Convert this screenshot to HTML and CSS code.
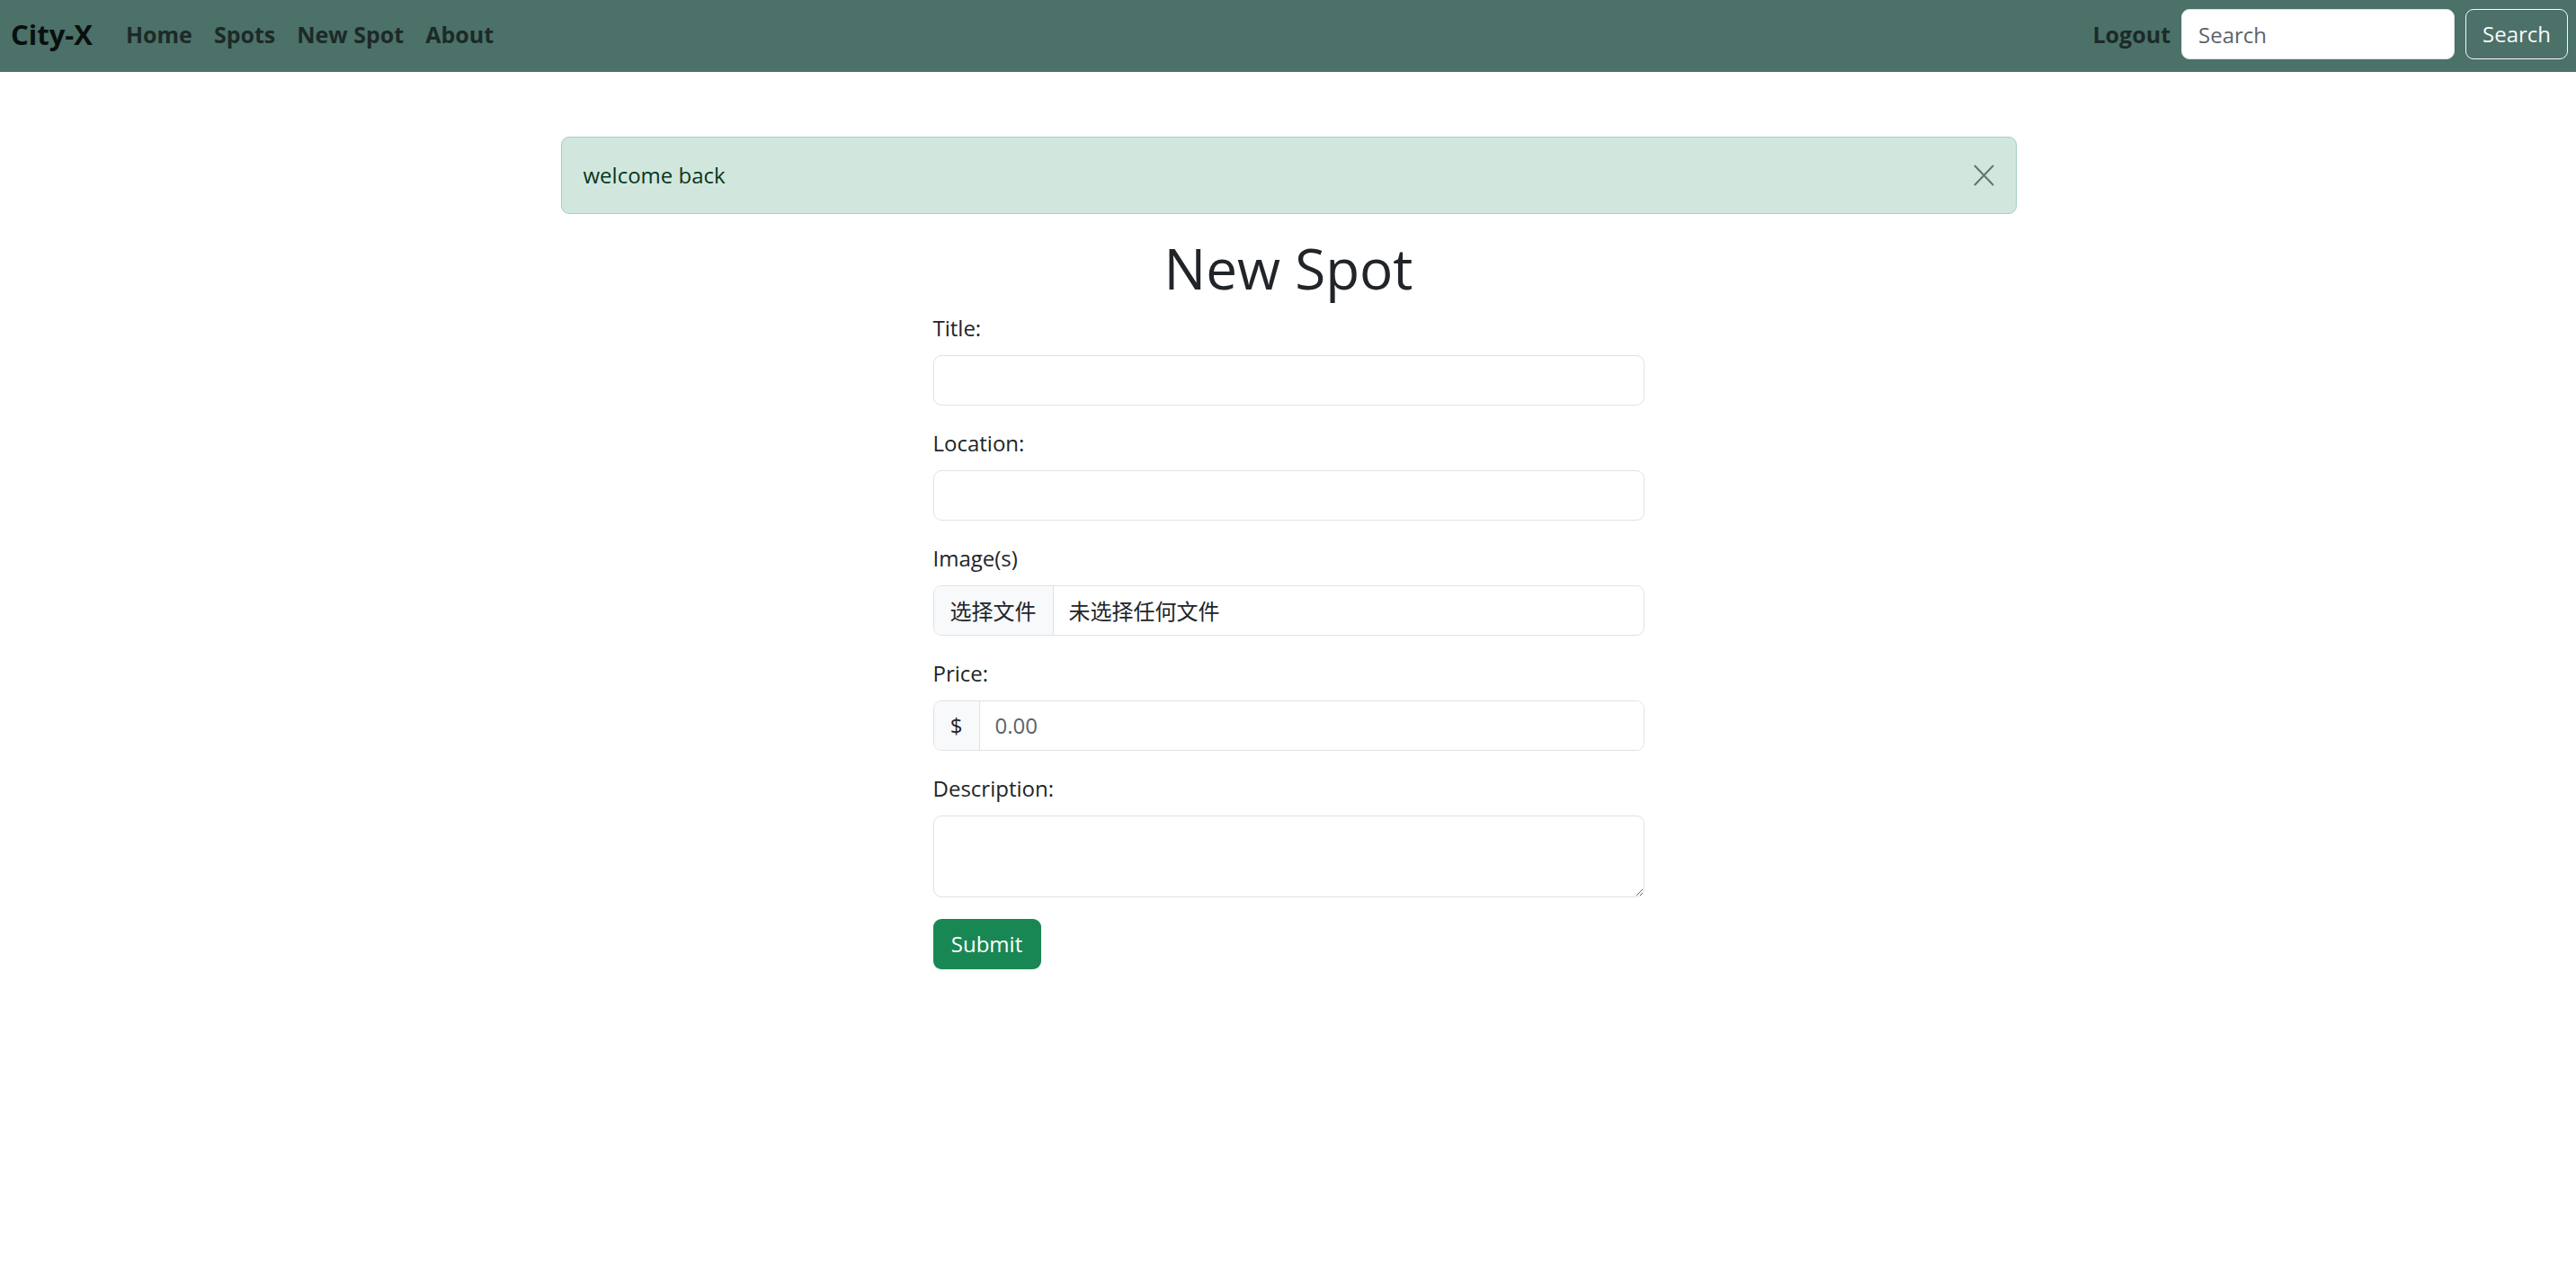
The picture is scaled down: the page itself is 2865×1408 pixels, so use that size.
FILE: index.html
```html
<!DOCTYPE html>
<html lang="en">
<head>
<meta charset="utf-8">
<title>New Spot</title>
<link rel="stylesheet" href="styles.css">
</head>
<body>
<nav class="navbar">
  <div class="nav-left">
    <a class="brand" href="#">City-X</a>
    <a class="nav-link" href="#">Home</a>
    <a class="nav-link" href="#">Spots</a>
    <a class="nav-link" href="#">New Spot</a>
    <a class="nav-link" href="#">About</a>
  </div>
  <div class="nav-right">
    <a class="nav-link" href="#">Logout</a>
    <form class="search-form">
      <input class="search-input" type="search" placeholder="Search">
      <button class="search-btn" type="button">Search</button>
    </form>
  </div>
</nav>

<main class="main">
  <div class="alert">
    <span>welcome back</span>
    <svg class="close-icon" width="23" height="24" viewBox="0 0 23 24" aria-label="Close">
      <line x1="1" y1="1" x2="22" y2="23" />
      <line x1="22" y1="1" x2="1" y2="23" />
    </svg>
  </div>

  <h1 class="page-title">New Spot</h1>

  <form class="spot-form">
    <div class="field">
      <label class="field-label">Title:</label>
      <input class="control" type="text">
    </div>
    <div class="field">
      <label class="field-label">Location:</label>
      <input class="control" type="text">
    </div>
    <div class="field">
      <label class="field-label">Image(s)</label>
      <div class="file-control">
        <span class="file-btn">选择文件</span>
        <span class="file-name">未选择任何文件</span>
      </div>
    </div>
    <div class="field">
      <label class="field-label">Price:</label>
      <div class="input-group">
        <span class="addon">$</span>
        <input class="group-input" type="text" placeholder="0.00">
      </div>
    </div>
    <div class="field">
      <label class="field-label">Description:</label>
      <textarea class="control textarea"></textarea>
    </div>
    <button class="submit-btn" type="button">Submit</button>
  </form>
</main>
</body>
</html>
```

FILE: styles.css
```css
* {
  box-sizing: border-box;
}

body {
  margin: 0;
  font-family: "Open Sans", "Noto Sans", "Noto Sans CJK SC", sans-serif;
  font-size: 24px;
  line-height: 36px;
  color: #212529;
  background: #ffffff;
}

a {
  text-decoration: none;
}

/* Navbar */
.navbar {
  height: 80px;
  background: #4b7169;
  display: flex;
  align-items: center;
  justify-content: space-between;
  padding: 10px 9px 14px 12px;
}

.nav-left,
.nav-right {
  display: flex;
  align-items: center;
}

.brand {
  font-size: 31px;
  font-weight: 700;
  color: #0a0f0e;
  margin-right: 25px;
}

.nav-link {
  font-size: 25px;
  font-weight: 700;
  color: #1c2a27;
  padding: 0 12px;
}

.search-form {
  display: flex;
  align-items: center;
  margin: 0;
}

.search-input {
  width: 304px;
  height: 56px;
  border: 1px solid #dee2e6;
  border-radius: 9px;
  padding: 0 18px;
  font: inherit;
  font-size: 24px;
  color: #212529;
  background: #ffffff;
  margin-right: 12px;
  outline: none;
}

.search-input::placeholder {
  color: #5c636a;
}

.search-btn {
  width: 114px;
  height: 56px;
  border: 1px solid #f8f9fa;
  border-radius: 9px;
  background: transparent;
  color: #f8f9fa;
  font: inherit;
  font-size: 24px;
  padding: 0;
}

/* Main */
.main {
  width: 1620px;
  margin: 72px auto 0;
  padding-left: 1px;
}

.alert {
  display: flex;
  align-items: center;
  justify-content: space-between;
  height: 86px;
  padding: 0 24px;
  background: #d1e7dd;
  border: 1px solid #a3cfbb;
  border-radius: 9px;
  color: #0a3622;
  margin-bottom: 24px;
}

.close-icon line {
  stroke: #66726d;
  stroke-width: 2;
}

.page-title {
  margin: 0 0 13px;
  text-align: center;
  font-size: 62px;
  line-height: 72px;
  font-weight: 400;
}

.spot-form {
  width: 791px;
  margin: 0 auto;
}

.field {
  display: flex;
  flex-direction: column;
  margin-bottom: 24px;
}

.field-label {
  display: block;
  margin-bottom: 12px;
}

.control {
  display: block;
  width: 100%;
  height: 56px;
  border: 1px solid #dee2e6;
  border-radius: 9px;
  background: #ffffff;
  padding: 0 18px;
  font: inherit;
  outline: none;
}

.textarea {
  height: 91px;
  resize: vertical;
  padding: 9px 18px;
}

.file-control,
.input-group {
  display: flex;
  height: 56px;
  border: 1px solid #dee2e6;
  border-radius: 9px;
  overflow: hidden;
  background: #ffffff;
}

.file-btn {
  display: flex;
  align-items: center;
  padding: 0 18px;
  background: #f8f9fa;
  border-right: 1px solid #dee2e6;
  font-family: "Noto Sans CJK SC", sans-serif;
  color: #212529;
}

.file-name {
  display: flex;
  align-items: center;
  padding: 0 17px;
  font-family: "Noto Sans CJK SC", sans-serif;
  color: #212529;
}

.addon {
  display: flex;
  align-items: center;
  justify-content: center;
  width: 51px;
  background: #f8f9fa;
  border-right: 1px solid #dee2e6;
}

.group-input {
  flex: 1;
  border: none;
  padding: 0 17px;
  font: inherit;
  outline: none;
  background: #ffffff;
}

.group-input::placeholder {
  color: #5c636a;
}

.submit-btn {
  display: block;
  width: 120px;
  height: 56px;
  margin-top: 1px;
  border: none;
  border-radius: 9px;
  background: #198754;
  color: #ffffff;
  font: inherit;
  padding: 0;
}
```
